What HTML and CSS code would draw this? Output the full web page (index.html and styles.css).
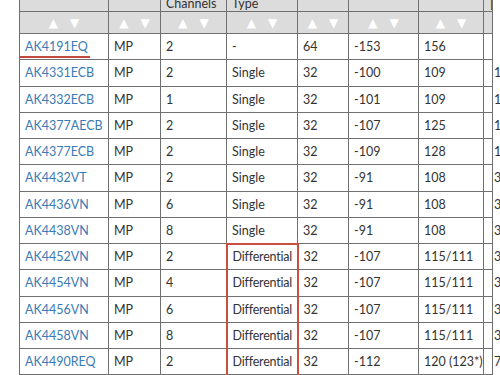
FILE: index.html
```html
<!DOCTYPE html>
<html>
<head>
<meta charset="utf-8">
<link rel="stylesheet" href="styles.css">
</head>
<body>
<div class="viewport">
<table class="spec">
<colgroup>
<col class="c1"><col class="c2"><col class="c3"><col class="c4"><col class="c5"><col class="c6"><col class="c7"><col class="c8">
</colgroup>
<thead>
<tr class="head">
<th>Part Number</th><th>Status</th><th class="low">Number of<br>Output<br>Channels</th><th class="low">Input<br>Signal<br>Type</th><th>Bits</th><th>THD+N (dB)</th><th>DR (dB)</th><th class="low last">Max<br>Sampling<br>[kHz]</th>
</tr>
<tr class="sort">
<th><span class="up">▲</span><span class="dn">▼</span></th>
<th><span class="up">▲</span><span class="dn">▼</span></th>
<th><span class="up">▲</span><span class="dn">▼</span></th>
<th><span class="up">▲</span><span class="dn">▼</span></th>
<th><span class="up">▲</span><span class="dn">▼</span></th>
<th><span class="up">▲</span><span class="dn">▼</span></th>
<th><span class="up">▲</span><span class="dn">▼</span></th>
<th></th>
</tr>
</thead>
<tbody>
<tr><td><a class="part marked">AK4191EQ</a></td><td>MP</td><td>2</td><td>-</td><td>64</td><td>-153</td><td>156</td><td class="last"></td></tr>
<tr><td><a class="part">AK4331ECB</a></td><td>MP</td><td>2</td><td>Single</td><td>32</td><td>-100</td><td>109</td><td class="last">192</td></tr>
<tr><td><a class="part">AK4332ECB</a></td><td>MP</td><td>1</td><td>Single</td><td>32</td><td>-101</td><td>109</td><td class="last">192</td></tr>
<tr><td><a class="part">AK4377AECB</a></td><td>MP</td><td>2</td><td>Single</td><td>32</td><td>-107</td><td>125</td><td class="last">192</td></tr>
<tr><td><a class="part">AK4377ECB</a></td><td>MP</td><td>2</td><td>Single</td><td>32</td><td>-109</td><td>128</td><td class="last">192</td></tr>
<tr><td><a class="part">AK4432VT</a></td><td>MP</td><td>2</td><td>Single</td><td>32</td><td>-91</td><td>108</td><td class="last">384</td></tr>
<tr><td><a class="part">AK4436VN</a></td><td>MP</td><td>6</td><td>Single</td><td>32</td><td>-91</td><td>108</td><td class="last">384</td></tr>
<tr><td><a class="part">AK4438VN</a></td><td>MP</td><td>8</td><td>Single</td><td>32</td><td>-91</td><td>108</td><td class="last">384</td></tr>
<tr><td><a class="part">AK4452VN</a></td><td>MP</td><td>2</td><td class="hl first"><span class="diff">Differential</span></td><td>32</td><td>-107</td><td>115/111</td><td class="last">384</td></tr>
<tr><td><a class="part">AK4454VN</a></td><td>MP</td><td>4</td><td class="hl"><span class="diff">Differential</span></td><td>32</td><td>-107</td><td>115/111</td><td class="last">384</td></tr>
<tr><td><a class="part">AK4456VN</a></td><td>MP</td><td>6</td><td class="hl"><span class="diff">Differential</span></td><td>32</td><td>-107</td><td>115/111</td><td class="last">384</td></tr>
<tr><td><a class="part">AK4458VN</a></td><td>MP</td><td>8</td><td class="hl"><span class="diff">Differential</span></td><td>32</td><td>-107</td><td>115/111</td><td class="last">384</td></tr>
<tr><td><a class="part">AK4490REQ</a></td><td>MP</td><td>2</td><td class="hl"><span class="diff">Differential</span></td><td>32</td><td>-112</td><td>120 (123*)</td><td class="last">768</td></tr>
</tbody>
</table>
</div>
</body>
</html>
```
FILE: styles.css
```css
html, body {
  margin: 0;
  padding: 0;
  background: #ffffff;
}
body {
  font-family: Lato, "Open Sans", sans-serif;
  font-size: 12.5px;
  color: #333333;
  overflow: hidden;
}
.viewport {
  width: 500px;
  height: 375px;
  overflow: hidden;
  padding-left: 19px;
  box-sizing: border-box;
}
.spec {
  border-collapse: collapse;
  table-layout: fixed;
  width: 473px;
  margin-top: -44px;
}
.c1 { width: 89px; }
.c2 { width: 52px; }
.c3 { width: 66px; }
.c4 { width: 71px; }
.c5 { width: 51px; }
.c6 { width: 70px; }
.c7 { width: 65px; }
.c8 { width: 9px; }
.spec th,
.spec td {
  border: 1px solid #707070;
  padding: 0 5px;
  text-align: left;
  white-space: nowrap;
  overflow: hidden;
}
.head th {
  background: #dcdcdc;
  font-weight: normal;
  color: #333;
  vertical-align: middle;
  height: 54px;
  padding-top: 0;
  padding-bottom: 0;
  line-height: 15px;
}
.head th.low {
  vertical-align: bottom;
  padding-bottom: 0;
}
.head th.last {
  padding-left: 6px;
  padding-right: 0;
}
.spec td.last {
  padding-left: 10px;
  padding-right: 0;
  overflow: visible;
}
.sort th {
  background: #dcdcdc;
  height: 21px;
  text-align: center;
  padding: 0;
  line-height: 20px;
}
.up, .dn {
  font-family: "DejaVu Sans", sans-serif;
  font-size: 12px;
  color: #ffffff;
  display: inline-block;
  margin: 0 6px;
}
.spec tbody tr {
  height: 26.25px;
}
.spec td {
  vertical-align: middle;
}
.part {
  color: #3b7ab4;
  text-decoration: none;
  position: relative;
}
.marked::after {
  content: "";
  position: absolute;
  left: -7px;
  right: -2px;
  bottom: -4px;
  height: 2px;
  background: #c24a3c;
}
.diff {
  letter-spacing: -0.2px;
}
.spec td.hl {
  border-left: 2px solid #c9503f;
  border-right: 2px solid #c9503f;
}
.spec td.hl.first {
  border-top: 2px solid #c9503f;
}
```
